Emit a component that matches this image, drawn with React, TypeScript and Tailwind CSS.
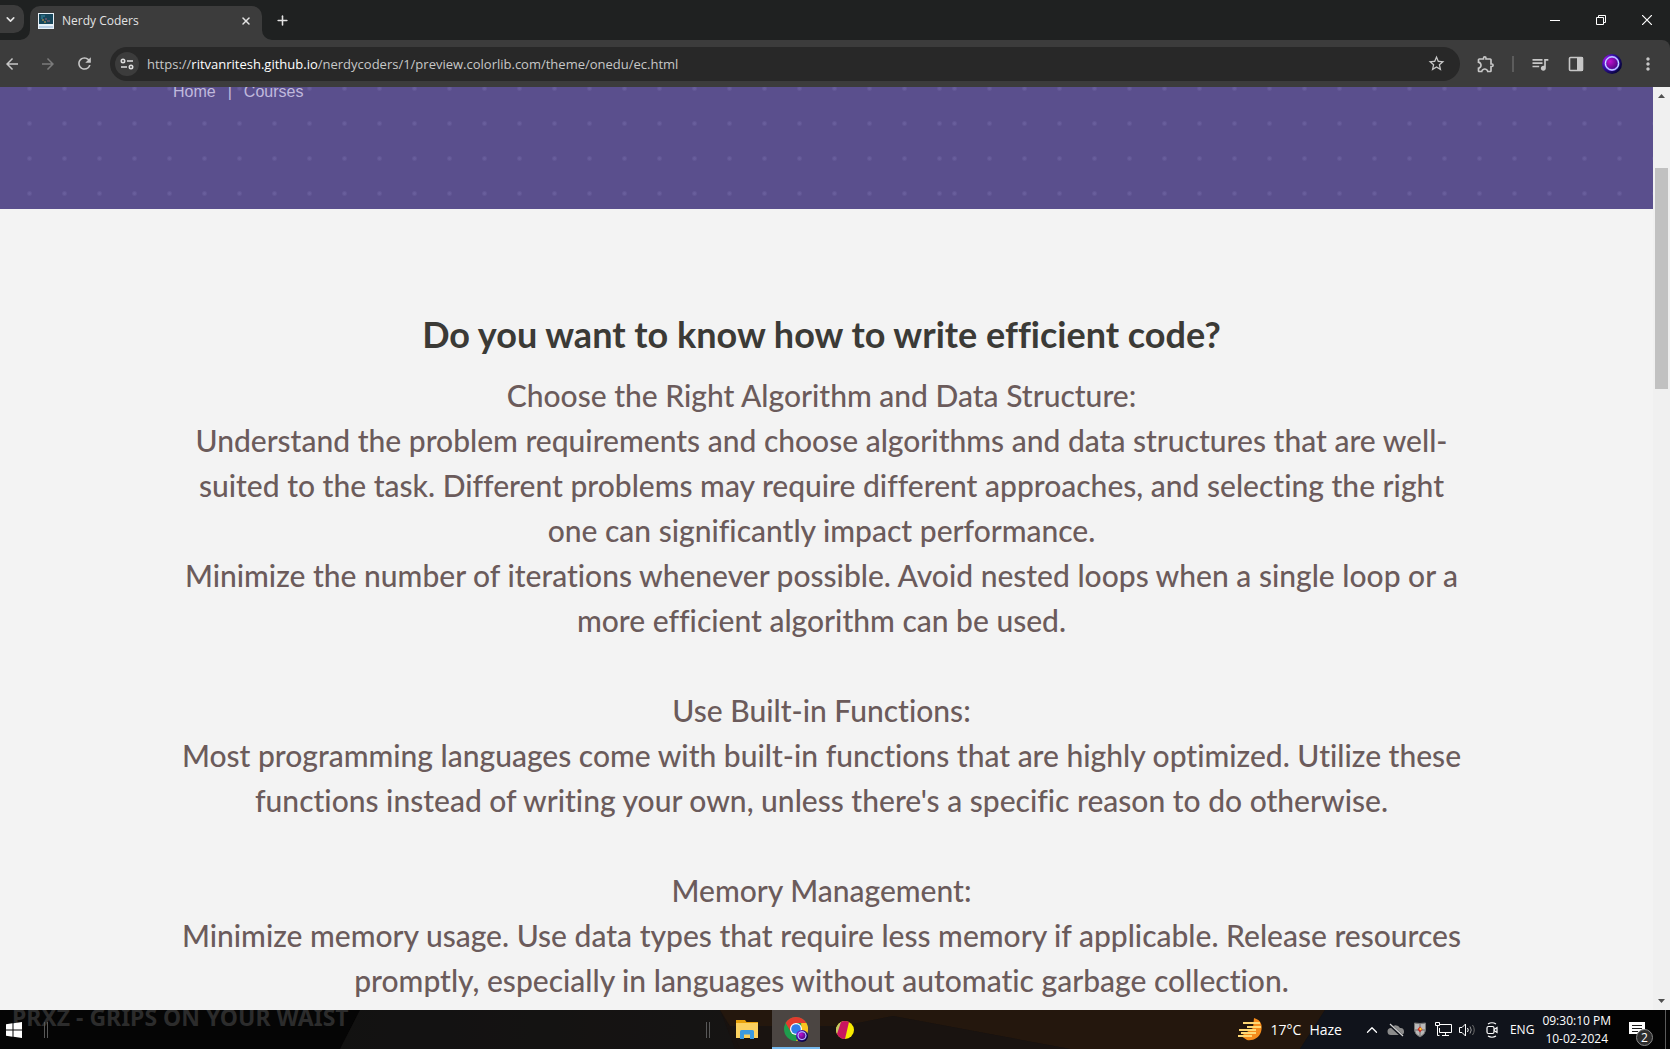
import type { ReactNode } from 'react';
import { ChevronDown, ChevronUp, Plus, X } from 'lucide-react';
import {
  MdArrowBack,
  MdArrowForward,
  MdMoreVert,
  MdOutlineExtension,
  MdQueueMusic,
  MdRefresh,
  MdStarBorder,
} from 'react-icons/md';

interface IconButtonProps {
  label: string;
  className?: string;
  children: ReactNode;
}

const sections = [
  {
    title: 'Choose the Right Algorithm and Data Structure:',
    lines: [
      'Understand the problem requirements and choose algorithms and data structures that are well-',
      'suited to the task. Different problems may require different approaches, and selecting the right',
      'one can significantly impact performance.',
      'Minimize the number of iterations whenever possible. Avoid nested loops when a single loop or a',
      'more efficient algorithm can be used.',
    ],
  },
  {
    title: 'Use Built-in Functions:',
    lines: [
      'Most programming languages come with built-in functions that are highly optimized. Utilize these',
      "functions instead of writing your own, unless there's a specific reason to do otherwise.",
    ],
  },
  {
    title: 'Memory Management:',
    lines: [
      'Minimize memory usage. Use data types that require less memory if applicable. Release resources',
      'promptly, especially in languages without automatic garbage collection.',
    ],
  },
];

function IconButton({ label, className = 'w-9', children }: IconButtonProps) {
  return (
    <button type="button" aria-label={label} className={`flex h-full shrink-0 items-center justify-center ${className}`}>
      {children}
    </button>
  );
}

function Favicon() {
  return (
    <svg width="16" height="16" viewBox="0 0 16 16">
      <rect width="16" height="16" fill="#e8f1f8" />
      <rect x="1" y="1" width="14" height="10" fill="#17475c" />
      <path d="M3 3h4M3 5h2" stroke="#3f8fa6" />
      <path d="M4 7h2M6 9h2" stroke="#d8a24a" />
      <path d="M7 6h2M9 8h3" stroke="#a0627a" />
      <rect x="1" y="13" width="14" height="2" fill="#b9cfe6" />
    </svg>
  );
}

function Orb({ size }: { size: number }) {
  return (
    <svg width={size} height={size} viewBox="0 0 20 20">
      <defs>
        <radialGradient id="orb" cx="0.25" cy="0.3" r="0.8">
          <stop offset="0" stopColor="#b012e6" />
          <stop offset="0.45" stopColor="#3a12a8" />
          <stop offset="1" stopColor="#05033a" />
        </radialGradient>
        <radialGradient id="orb-core" cx="0.35" cy="0.35" r="0.7">
          <stop offset="0" stopColor="#c010d0" />
          <stop offset="1" stopColor="#45067c" />
        </radialGradient>
      </defs>
      <circle cx="10" cy="10" r="10" fill="url(#orb)" />
      <circle cx="10" cy="9.4" r="6.6" fill="url(#orb-core)" stroke="#7c5cff" strokeWidth="2" />
      <circle cx="10" cy="9.4" r="6.6" fill="none" stroke="#dff2ff" strokeWidth="1" />
    </svg>
  );
}

function TabStrip() {
  return (
    <div className="flex h-10 items-end bg-[#1f2121] text-[#e3e3e3]">
      <button
        type="button"
        aria-label="Search tabs"
        className="mb-[7px] flex h-7 w-6 items-center rounded-r-[10px] bg-[#3c3c3c] pl-1"
      >
        <ChevronDown size={13} strokeWidth={3} />
      </button>
      <div className="relative ml-[6px] flex h-[34px] w-[232px] items-center rounded-t-[10px] bg-[#3c3c3c] px-2 pb-1">
        <svg className="absolute bottom-0 -left-[10px]" width="10" height="10">
          <path d="M10 0v10H0A10 10 0 0 0 10 0z" fill="#3c3c3c" />
        </svg>
        <svg className="absolute -right-[10px] bottom-0" width="10" height="10">
          <path d="M0 0v10h10A10 10 0 0 1 0 0z" fill="#3c3c3c" />
        </svg>
        <Favicon />
        <span className="ml-2 flex-1 text-[12px]">Nerdy Coders</span>
        <IconButton label="Close tab" className="w-4">
          <X size={12} strokeWidth={3} />
        </IconButton>
      </div>
      <button type="button" aria-label="New tab" className="ml-3 flex h-10 w-4 items-center justify-center">
        <Plus size={15} strokeWidth={2.5} className="shrink-0" />
      </button>
      <div className="ml-auto flex h-10 text-white">
        <IconButton label="Minimize" className="w-[46px]">
          <svg width="10" height="10" stroke="currentColor">
            <path d="M0 5.5h10" />
          </svg>
        </IconButton>
        <IconButton label="Restore" className="w-[46px]">
          <svg width="10" height="10" fill="none" stroke="currentColor">
            <path d="M.5 2.5h7v7h-7zM2.500 2V.5h7v7H8" />
          </svg>
        </IconButton>
        <IconButton label="Close" className="w-[46px]">
          <svg width="10" height="10" stroke="currentColor" strokeWidth="1.2">
            <path d="M0 0l10 10M10 0L0 10" />
          </svg>
        </IconButton>
      </div>
    </div>
  );
}

function Toolbar() {
  return (
    <div className="bg-[#1f2121]">
      <div className="flex h-[47px] items-center rounded-tr-lg bg-[#3c3c3c] pr-1 text-[#c7c7c7]">
        <IconButton label="Back" className="-ml-[6px] w-9">
          <MdArrowBack size={18} />
        </IconButton>
        <IconButton label="Forward">
          <MdArrowForward size={18} className="text-[#7b7b7b]" />
        </IconButton>
        <IconButton label="Reload">
          <MdRefresh size={19} />
        </IconButton>
        <div className="mx-2 flex h-[34px] flex-1 items-center rounded-full bg-[#282828] pr-[14px] pl-[5px]">
          <button
            type="button"
            aria-label="View site information"
            className="flex size-6 items-center justify-center rounded-full bg-[#3c3c3c]"
          >
            <svg width="14" height="14" fill="none" stroke="#dedede" strokeWidth="1.600">
              <circle cx="3" cy="4" r="1.700" />
              <path d="M7 4h6M1 10h6" />
              <circle cx="11" cy="10" r="1.700" />
            </svg>
          </button>
          <a href="#" className="ml-2 flex-1 text-[13px] leading-5 whitespace-nowrap">
            https://<span className="text-white">ritvanritesh.github.io</span>
            /nerdycoders/1/preview.colorlib.com/theme/onedu/ec.html
          </a>
          <button type="button" aria-label="Bookmark this tab">
            <MdStarBorder size={19} />
          </button>
        </div>
        <IconButton label="Extensions">
          <MdOutlineExtension size={20} />
        </IconButton>
        <div className="flex w-[18px] justify-center">
          <div className="h-4 w-[2px] bg-[#5c5c5c]" />
        </div>
        <IconButton label="Media controls">
          <MdQueueMusic size={20} />
        </IconButton>
        <IconButton label="Side panel">
          <svg width="16" height="16">
            <rect x="1.500" y="1.500" width="13" height="13" rx="1" fill="none" stroke="currentColor" strokeWidth="1.600" />
            <path d="M9 1h6v14H9z" fill="currentColor" />
          </svg>
        </IconButton>
        <IconButton label="Profile">
          <Orb size={20} />
        </IconButton>
        <IconButton label="Menu">
          <MdMoreVert size={20} />
        </IconButton>
      </div>
    </div>
  );
}

function Page() {
  return (
    <main className="flex-1 overflow-hidden bg-[#f3f3f3]">
      <section className="relative h-[122px] overflow-hidden bg-[#5a4f8d]">
        {/* the dotted banner is tiled twice */}
        <div className="absolute inset-0 flex">
          <div className="w-[947px] bg-[radial-gradient(circle,#685e9c_1px,transparent_3px)] bg-[length:35px_35px] bg-[position:12px_-16px]" />
          <div className="flex-1 bg-[radial-gradient(circle,#685e9c_1px,transparent_3px)] bg-[length:35px_35px] bg-[position:-10px_-16px]" />
        </div>
        <nav className="relative -mt-[7px] flex gap-3 pl-[173px] font-['Liberation_Sans',sans-serif] text-[16px] leading-6 text-[#c0b9dc]">
          <a href="#">Home</a>
          <span>|</span>
          <a href="#">Courses</a>
        </nav>
      </section>
      <article className="pt-[102px] pr-[10px] text-center font-['Lato',sans-serif] whitespace-nowrap [font-variant-ligatures:none]">
        <h1 className="mb-4 text-[36px] leading-[46px] font-bold text-[#3b3a36]">
          Do you want to know how to write efficient code?
        </h1>
        {sections.map((section) => (
          <section key={section.title} className="mb-[45px] text-[30px] leading-[45px] font-medium text-[#6b5b5b]">
            <h2>{section.title}</h2>
            {section.lines.map((line) => (
              <p key={line}>{line}</p>
            ))}
          </section>
        ))}
      </article>
    </main>
  );
}

function Scrollbar() {
  return (
    <div className="flex w-[17px] flex-col items-center bg-[#f0f0f0] text-[#505050]">
      <svg width="17" height="17">
        <path d="M5 11h7L8.500 7z" fill="currentColor" />
      </svg>
      <div className="mt-16 h-[221px] w-[13px] bg-[#c1c1c1]" />
      <svg className="mt-auto" width="17" height="17">
        <path d="M5 6h7L8.500 10z" fill="currentColor" />
      </svg>
    </div>
  );
}

function Grip() {
  return <div className="h-4 w-1 border-x border-[#585858]" />;
}

function Taskbar() {
  return (
    <footer className="relative flex h-[39px] shrink-0 items-center overflow-hidden bg-linear-to-r from-[#050505] via-[#1b1411] to-[#0b0d12] text-white">
      <svg className="absolute inset-0 size-full" viewBox="0 0 1670 39" preserveAspectRatio="none">
        <path d="M0 0h360l-20 39H0z" fill="#050505" />
        <path d="M340 39L360 0h360l15 39z" fill="#151515" opacity="0.7" />
        <path d="M720 0h605l-25 39h-230L893 6l-50 10H730z" fill="#24170d" />
        <path d="M730 16h113l50-10 177 33H740z" fill="#191310" />
        <path d="M1325 0h280l-12 39h-293z" fill="#10131b" />
        <path d="M1600 0h70v39h-70z" fill="#030303" />
      </svg>
      <span className="absolute -top-[9px] left-3 font-['Noto_Sans',sans-serif] text-[23px] leading-8 font-bold whitespace-nowrap text-[#2c2c2c]">
        PRXZ - GRIPS ON YOUR WAIST
      </span>

      <div className="relative flex w-[42%] items-center gap-[22px] pl-[6px]">
        <button type="button" aria-label="Start">
          <svg width="16" height="16" fill="#fff">
            <path d="M0 2.300L6.500 1.300V7.500H0zM7.500 1.200L16 0v7.500H7.500zM0 8.500h6.500v6.200L0 13.700zM7.500 8.500H16V16l-8.500-1.200z" />
          </svg>
        </button>
        <Grip />
      </div>
      <div className="relative flex h-full items-center pl-[5px]">
        <Grip />
        <IconButton label="File Explorer" className="ml-3 w-[50px]">
          <svg width="22" height="19">
            <path d="M0 0h9l1.500 2H22v3H0z" fill="#e8a20c" />
            <path d="M0 3h22v15H0z" fill="#fbd160" />
            <path d="M4 19v-7.500Q4 10 5.500 10h11q1.500 0 1.500 1.500V19h-4v-4.500H8V19z" fill="#3b9ae1" />
          </svg>
        </IconButton>
        <IconButton label="Google Chrome" className="relative w-12 border-b-2 border-[#76b9ed] bg-[#4b4542]">
          <svg width="24" height="24" viewBox="0 0 24 24">
            <circle cx="12" cy="12" r="12" fill="#1f9d4d" />
            <path d="M1.600 6A12 12 0 0 1 22.400 6H12L7 15z" fill="#e33b2e" />
            <path d="M22.400 6A12 12 0 0 1 12 24l5.200-9V6z" fill="#fcc31e" />
            <circle cx="12" cy="12" r="6" fill="#fff" />
            <circle cx="12" cy="12" r="4.800" fill="#2f7de9" />
          </svg>
          <span className="absolute right-3 bottom-[5px]">
            <Orb size={12} />
          </span>
        </IconButton>
        <IconButton label="Media player" className="w-[50px]">
          <svg width="18" height="18" viewBox="0 0 18 18">
            <circle cx="9" cy="9" r="9" fill="#f7ea00" />
            <path d="M1 13A9 9 0 0 1 5 1L8 0z" fill="#c3c66a" />
            <path d="M5 1A9 9 0 0 1 13 1L9 18A9 9 0 0 1 1 13z" fill="#c9155f" />
          </svg>
        </IconButton>
      </div>

      <div className="relative ml-auto flex h-full items-center text-[12px]">
        <button type="button" className="mr-[18px] flex items-center text-[14px]">
          <svg className="mr-2" width="25" height="23" viewBox="0 0 25 23">
            <path d="M16 0C23 2 25 7 23 14C21 20 15 23 9 22L3 18L15 10z" fill="#f58c1c" />
            <path d="M5 5h17M9 9h14M1 12h17M3 15h15M0 18h14" stroke="#ffd873" strokeWidth="1.800" />
          </svg>
          <span className="mr-2">17°C</span>
          <span>Haze</span>
        </button>
        <IconButton label="Show hidden icons" className="w-6">
          <ChevronUp size={18} strokeWidth={1.700} className="shrink-0" />
        </IconButton>
        <IconButton label="OneDrive" className="w-6">
          <svg width="18" height="14">
            <path d="M4 12a3.500 3.500 0 0 1 0-7a5 5 0 0 1 9 0a3.500 3.500 0 0 1 1 7z" fill="#8b8b8b" />
            <path d="M2 1l13 12" stroke="#10131b" strokeWidth="3" />
            <path d="M3 1l13 12" stroke="#d5d5d5" strokeWidth="1.200" />
          </svg>
        </IconButton>
        <IconButton label="Security" className="w-6">
          <svg width="12" height="16">
            <path d="M.5 1Q6 2 11.500 1v7q0 4-5.500 7Q.5 12 .5 8z" fill="#b9b9b9" stroke="#777" />
            <path d="M6 2v12M1 8h10" stroke="#6a6a6a" />
            <path d="M6 4.500L8.500 7.200 6 10.500 3.500 7.200z" fill="#cf2525" />
            <circle cx="6.500" cy="7" r="1.200" fill="#f6d32a" />
          </svg>
        </IconButton>
        <IconButton label="Network" className="w-6">
          <svg width="17" height="15" fill="none" stroke="#fff">
            <path d="M5 2.500h11.500v8H4.500V6M10.500 10.500v3M7 13.500h7M.5.5h4v3h-4zM2.500 3.500v10h2" />
          </svg>
        </IconButton>
        <IconButton label="Volume" className="w-6">
          <svg width="17" height="14" fill="none" stroke="#fff">
            <path d="M.5 4.500H3L6.500 1v12L3 9.500H.5zM8.500 5q1.500 2 0 4" />
            <path d="M11 3.500q2.500 3.500 0 7" stroke="#9a9a9a" />
            <path d="M13.500 2q3.500 5 0 10" stroke="#6c6c6c" />
          </svg>
        </IconButton>
        <IconButton label="Meet now" className="w-6">
          <svg width="12" height="16" fill="none" stroke="#fff" strokeWidth="1.200">
            <rect x="1" y="4.500" width="7" height="7" rx="1.500" />
            <path d="M8 7.500l3-2v5l-3-2M2 2Q6-.5 10 2M2 14q4 2.500 8 0" />
          </svg>
        </IconButton>
        <button type="button" className="ml-[6px]">ENG</button>
        <button type="button" className="ml-2 text-center leading-[18px] whitespace-nowrap">
          <span className="block">09:30:10 PM</span>
          <span className="block">10-02-2024</span>
        </button>
        <button type="button" aria-label="2 notifications" className="relative ml-[18px] h-full w-9">
          <svg className="absolute top-3 left-0" width="16" height="16">
            <path d="M0 0h16v12h-4v3l-4-3H0z" fill="#fff" />
            <path d="M3 3.500h10M3 6.500h10M3 9.500h6" stroke="#1b1b1b" />
          </svg>
          <span className="absolute top-[19px] left-[7px] flex size-[17px] items-center justify-center rounded-full border border-[#8a8a8a] bg-[#2d2d2d] text-[12px] leading-none">
            2
          </span>
        </button>
        <div className="mr-1 h-full w-px bg-[#5a5a5a]" />
      </div>
    </footer>
  );
}

export default function App() {
  return (
    <div className="flex h-screen flex-col overflow-hidden font-['Open_Sans',sans-serif]">
      <TabStrip />
      <Toolbar />
      <div className="flex min-h-0 flex-1">
        <Page />
        <Scrollbar />
      </div>
      <Taskbar />
    </div>
  );
}
